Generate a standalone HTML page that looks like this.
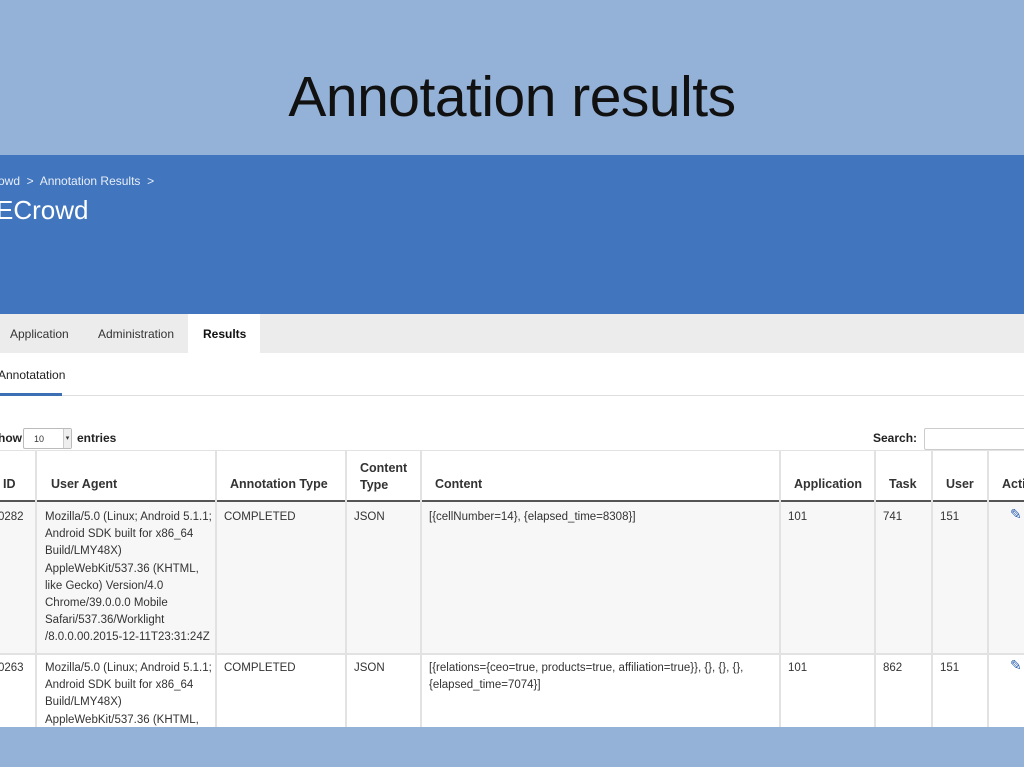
<!DOCTYPE html>
<html><head><meta charset="utf-8"><style>
*{margin:0;padding:0;box-sizing:border-box}
body{width:1024px;height:767px;position:relative;overflow:hidden;background:#fff;font-family:"Liberation Sans",sans-serif;color:#333}
.a{position:absolute;white-space:nowrap}
#top{position:absolute;left:0;top:0;width:1024px;height:155px;background:#94b2d8}
#title{position:absolute;left:0;width:1024px;top:64px;text-align:center;font-size:57px;color:#111;font-family:"Liberation Sans",sans-serif;letter-spacing:-0.5px}
#hdr{position:absolute;left:0;top:155px;width:1024px;height:159px;background:#4176bf;color:#fff}
#tabs{position:absolute;left:0;top:314px;width:1024px;height:39px;background:#ececec}
#bot{position:absolute;left:0;top:727px;width:1024px;height:40px;background:#94b2d8}
.th{position:absolute;font-weight:bold;font-size:12.5px;color:#333}
.td{position:absolute;font-size:11.5px;line-height:17.2px;color:#333;white-space:nowrap}
.vl{position:absolute;width:2px;background:#e2e2e2}
</style></head><body>
<div id="top"></div>
<div id="title">Annotation results</div>
<div id="hdr">
<div class="a" style="left:-2px;top:19px;font-size:12px;color:#e8eef8">owd &nbsp;&gt;&nbsp; Annotation Results &nbsp;&gt;</div>
<div class="a" style="left:-4px;top:40px;font-size:26px">ECrowd</div>
</div>
<div id="tabs">
<div class="a" style="left:10px;top:13px;font-size:12px;color:#333">Application</div>
<div class="a" style="left:98px;top:13px;font-size:12px;color:#333">Administration</div>
<div style="position:absolute;left:188px;top:0;width:72px;height:39px;background:#fff"></div>
<div class="a" style="left:203px;top:13px;font-size:12px;font-weight:bold;color:#111">Results</div>
</div>
<div class="a" style="left:-2px;top:368px;font-size:12px;color:#222">Annotatation</div>
<div style="position:absolute;left:0;top:395px;width:1024px;height:1px;background:#ddd"></div>
<div style="position:absolute;left:0;top:393px;width:62px;height:3px;background:#3d6fb4"></div>
<div class="a" style="left:-2px;top:431px;font-size:12px;font-weight:bold;color:#222">how</div>
<div style="position:absolute;left:23px;top:428px;width:49px;height:21px;border:1px solid #bbb;border-radius:2px;background:#fff;font-size:9px;padding:5px 0 0 10px;color:#333">10<span style="position:absolute;right:0;top:0;width:8px;height:19px;background:#eee;border-left:1px solid #ccc;font-size:7px;text-align:center;line-height:19px">▾</span></div>
<div class="a" style="left:77px;top:431px;font-size:12px;font-weight:bold;color:#222">entries</div>
<div class="a" style="left:873px;top:431px;font-size:12px;font-weight:bold;color:#222">Search:</div>
<div style="position:absolute;left:924px;top:428px;width:110px;height:22px;border:1px solid #ccc;border-radius:2px"></div>
<div style="position:absolute;left:0;top:450px;width:1024px;height:1px;background:#e2e2e2"></div>
<div style="position:absolute;left:0;top:500px;width:1024px;height:2px;background:#555"></div>
<div style="position:absolute;left:0;top:502px;width:1024px;height:151px;background:#f7f7f7"></div>
<div style="position:absolute;left:0;top:653px;width:1024px;height:2px;background:#e2e2e2"></div>
<div style="position:absolute;left:0;top:655px;width:1024px;height:72px;background:#fff"></div>
<div class="vl" style="left:35px;top:450px;height:277px"></div>
<div class="vl" style="left:215px;top:450px;height:277px"></div>
<div class="vl" style="left:345px;top:450px;height:277px"></div>
<div class="vl" style="left:420px;top:450px;height:277px"></div>
<div class="vl" style="left:779px;top:450px;height:277px"></div>
<div class="vl" style="left:874px;top:450px;height:277px"></div>
<div class="vl" style="left:931px;top:450px;height:277px"></div>
<div class="vl" style="left:987px;top:450px;height:277px"></div>
<div class="th" style="left:3px;top:477px">ID</div>
<div class="th" style="left:51px;top:477px">User Agent</div>
<div class="th" style="left:230px;top:477px">Annotation Type</div>
<div class="th" style="left:360px;top:460px;line-height:17px">Content<br>Type</div>
<div class="th" style="left:435px;top:477px">Content</div>
<div class="th" style="left:794px;top:477px">Application</div>
<div class="th" style="left:889px;top:477px">Task</div>
<div class="th" style="left:946px;top:477px">User</div>
<div class="th" style="left:1002px;top:477px">Acti</div>
<div class="td" style="left:-2px;top:509px">0282</div>
<div class="td" style="left:45px;top:509px">Mozilla/5.0 (Linux; Android 5.1.1;<br>Android SDK built for x86_64<br>Build/LMY48X)<br>AppleWebKit/537.36 (KHTML,<br>like Gecko) Version/4.0<br>Chrome/39.0.0.0 Mobile<br>Safari/537.36/Worklight<br>/8.0.0.00.2015-12-11T23:31:24Z</div>
<div class="td" style="left:224px;top:509px">COMPLETED</div>
<div class="td" style="left:354px;top:509px">JSON</div>
<div class="td" style="left:429px;top:509px">[{cellNumber=14}, {elapsed_time=8308}]</div>
<div class="td" style="left:788px;top:509px">101</div>
<div class="td" style="left:883px;top:509px">741</div>
<div class="td" style="left:940px;top:509px">151</div>
<div class="a" style="left:1010px;top:506px;color:#2a5fb0;font-size:14px">✎</div>
<div class="td" style="left:-2px;top:660px">0263</div>
<div class="td" style="left:45px;top:660px">Mozilla/5.0 (Linux; Android 5.1.1;<br>Android SDK built for x86_64<br>Build/LMY48X)<br>AppleWebKit/537.36 (KHTML,</div>
<div class="td" style="left:224px;top:660px">COMPLETED</div>
<div class="td" style="left:354px;top:660px">JSON</div>
<div class="td" style="left:429px;top:660px">[{relations={ceo=true, products=true, affiliation=true}}, {}, {}, {},<br>{elapsed_time=7074}]</div>
<div class="td" style="left:788px;top:660px">101</div>
<div class="td" style="left:883px;top:660px">862</div>
<div class="td" style="left:940px;top:660px">151</div>
<div class="a" style="left:1010px;top:657px;color:#2a5fb0;font-size:14px">✎</div>
<div id="bot"></div>
</body></html>
